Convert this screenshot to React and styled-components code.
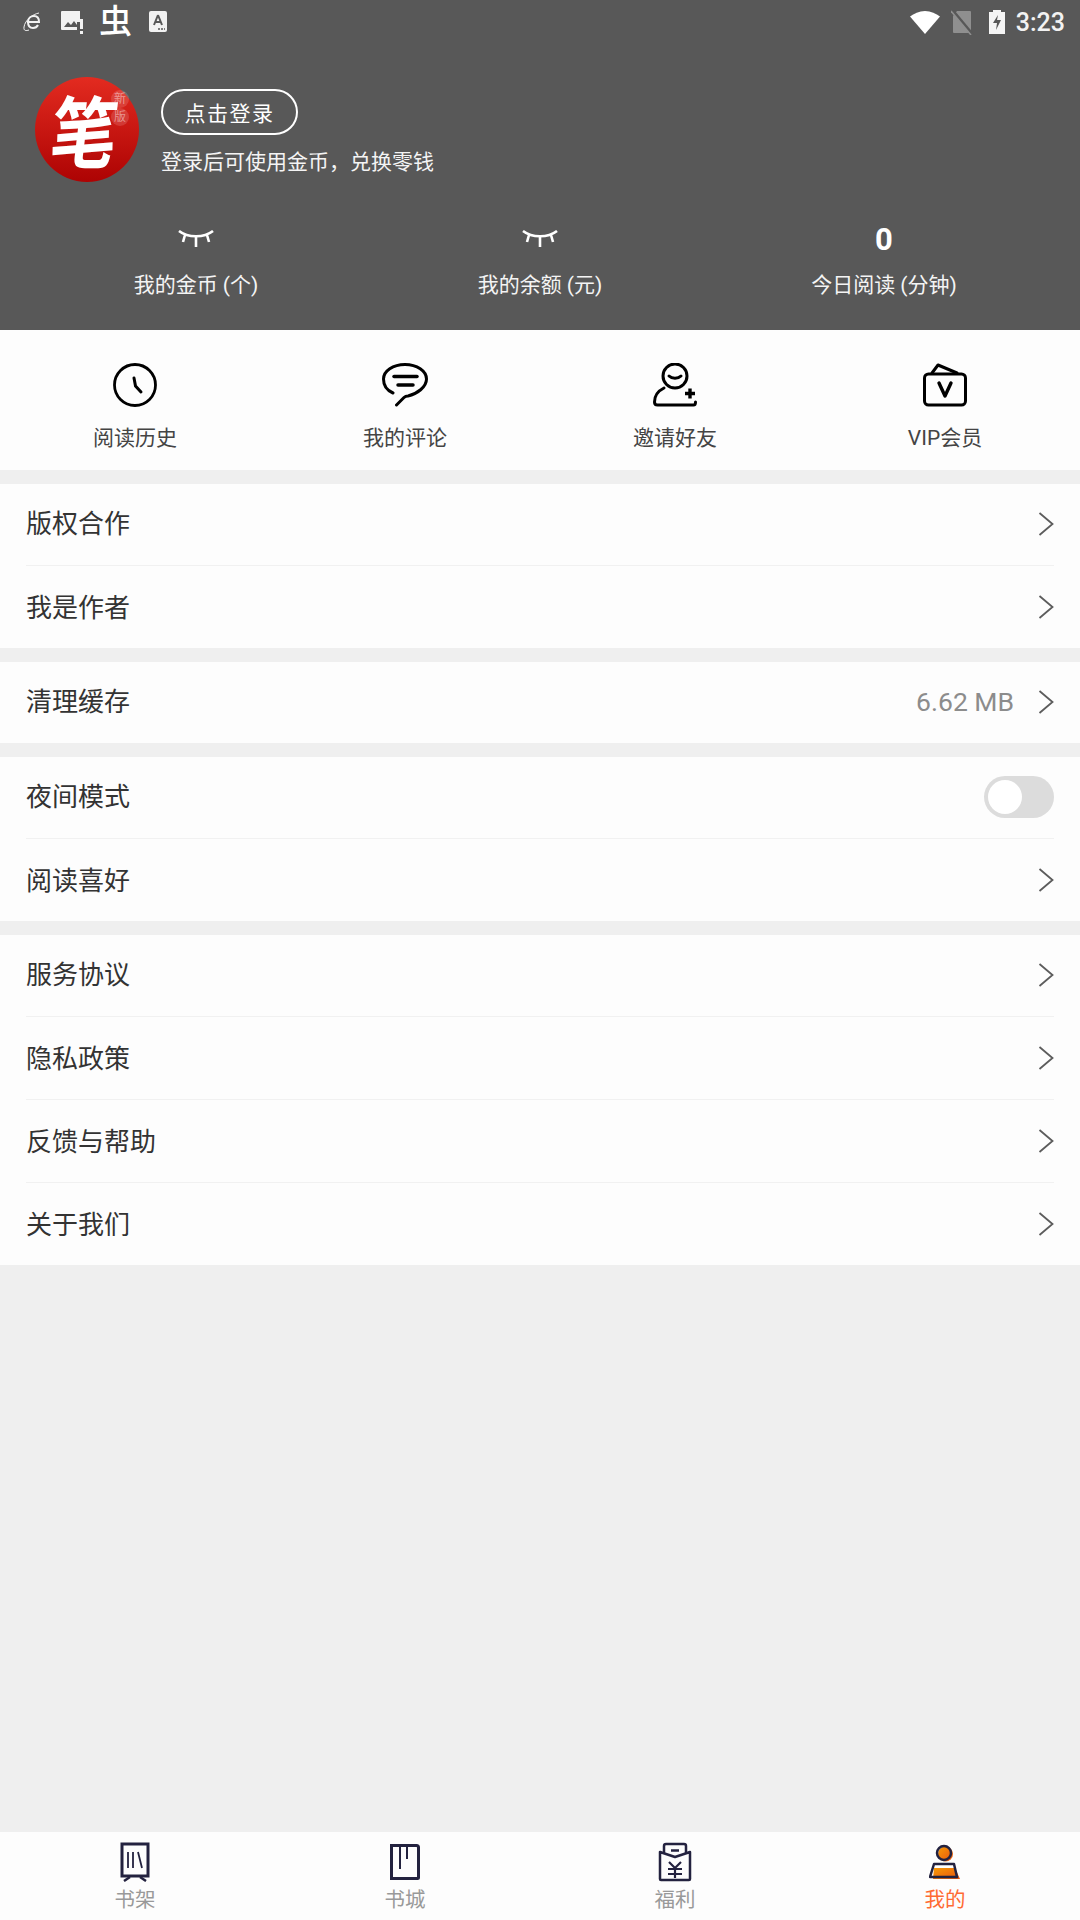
import React from "react";
import styled, { createGlobalStyle } from "styled-components";

const CJK = `"Roboto", "Noto Sans CJK SC", sans-serif`;

const Global = createGlobalStyle`
  html, body { margin: 0; padding: 0; background: #efefef; }
  * { box-sizing: border-box; }
  body { font-family: ${CJK}; }
`;

const Page = styled.div`
  width: 1080px;
  height: 1920px;
  display: flex;
  flex-direction: column;
  background: #efefef;
  overflow: hidden;
`;

const Header = styled.header`
  height: 330px;
  background: #585858;
  color: #fff;
  display: flex;
  flex-direction: column;
`;

const StatusBar = styled.div`
  height: 44px;
  display: flex;
  align-items: center;
  justify-content: space-between;
  padding: 0 15px 0 23px;
`;

const StatusGroup = styled.div`
  display: flex;
  align-items: center;
  gap: ${(p) => p.$gap}px;
`;

const BugGlyph = styled.span`
  font-size: 33px;
  line-height: 36px;
  font-weight: 500;
  width: 34px;
  text-align: left;
  color: #fff;
`;

const Clock = styled.span`
  font-family: "Roboto", sans-serif;
  font-size: 25px;
  font-weight: 500;
  color: #f2f2f2;
`;

const Profile = styled.div`
  display: flex;
  align-items: flex-start;
  gap: 22px;
  padding: 33px 0 0 35px;
`;

const Avatar = styled.div`
  position: relative;
  width: 104px;
  height: 105px;
  border-radius: 50%;
  background: linear-gradient(#e32b20, #ad0303);
  display: flex;
  align-items: center;
  justify-content: center;
`;

const AvatarMark = styled.span`
  font-family: "Noto Sans CJK SC", sans-serif;
  font-size: 78px;
  font-weight: 700;
  line-height: 1;
  color: #fff;
  transform: translate(-2px, -2px) scaleX(0.85) skewX(-8deg);
`;

const Stamp = styled.span`
  position: absolute;
  right: 10px;
  top: ${(p) => p.$top}px;
  width: 18px;
  height: 18px;
  border-radius: 50%;
  background: rgba(255, 255, 255, 0.14);
  color: rgba(255, 255, 255, 0.45);
  font-size: 12px;
  line-height: 18px;
  text-align: center;
`;

const ProfileText = styled.div`
  display: flex;
  flex-direction: column;
  align-items: flex-start;
  padding-top: 12px;
`;

const LoginButton = styled.button`
  width: 137px;
  height: 46px;
  border: 2px solid #fff;
  border-radius: 23px;
  background: transparent;
  color: #fff;
  font-family: ${CJK};
  font-size: 21px;
  letter-spacing: 1.5px;
  padding: 0;
`;

const Hint = styled.div`
  margin-top: 12px;
  font-size: 21px;
  line-height: 30px;
  color: #f4f4f4;
`;

const Stats = styled.div`
  display: grid;
  grid-template-columns: repeat(3, 344px);
  padding: 39px 24px 0;
`;

const Stat = styled.div`
  display: flex;
  flex-direction: column;
  align-items: center;
`;

const StatValue = styled.div`
  height: 36px;
  display: flex;
  align-items: center;
  justify-content: center;
  font-size: 31px;
  font-weight: 700;
`;

const StatLabel = styled.div`
  margin-top: 13px;
  font-size: 21px;
  line-height: 30px;
  color: #f4f4f4;
`;

const Shortcuts = styled.nav`
  height: 140px;
  background: #fdfdfd;
  display: grid;
  grid-template-columns: repeat(4, 270px);
`;

const Shortcut = styled.div`
  display: flex;
  flex-direction: column;
  align-items: center;
  padding-top: 33px;
`;

const ShortcutLabel = styled.div`
  margin-top: 16px;
  font-size: 21px;
  line-height: 30px;
  color: #444;
`;

const Group = styled.section`
  margin-top: 14px;
  background: #fdfdfd;
  padding: 0 26px;
`;

const Row = styled.div`
  height: ${(p) => (p.$first ? 81 : 83)}px;
  padding-bottom: ${(p) => (p.$first ? 2 : 0)}px;
  display: flex;
  align-items: center;
  border-top: ${(p) => (p.$first ? "none" : "1px solid #f1f1f1")};
`;

const RowTitle = styled.div`
  flex: 1;
  padding-bottom: 4px;
  font-size: 26px;
  color: #333;
`;

const RowValue = styled.div`
  font-size: 26.5px;
  color: #8c8c8c;
  margin-right: 24px;
`;

const Toggle = styled.div`
  width: 70px;
  height: 42px;
  border-radius: 21px;
  background: #dcdcdc;
  padding: 4px;
`;

const Knob = styled.div`
  width: 34px;
  height: 34px;
  border-radius: 50%;
  background: #fff;
`;

const Spacer = styled.div`
  flex: 1;
`;

const TabBar = styled.nav`
  height: 88px;
  background: #fdfdfd;
  display: grid;
  grid-template-columns: repeat(4, 270px);
`;

const Tab = styled.div`
  display: flex;
  flex-direction: column;
  align-items: center;
  padding-top: 10px;
`;

const TabLabel = styled.div`
  margin-top: 4px;
  font-size: 20.5px;
  line-height: 28px;
  color: ${(p) => (p.$active ? "#ff6a33" : "#999")};
`;

const Closed = () => (
  <svg width="36" height="18" viewBox="0 0 36 18" fill="none" stroke="#fff" strokeWidth="2.6">
    <path d="M1 1c9 7 25 7 34 0M18 6v11M7 5l-2 7M29 5l2 7" />
  </svg>
);

const Chevron = () => (
  <svg width="16" height="24" viewBox="0 0 16 24" fill="none" stroke="#5c5c5c" strokeWidth="1.8">
    <path d="M1.500 1l13 11-13 11" />
  </svg>
);

const History = () => (
  <svg width="44" height="44" viewBox="0 0 44 44" fill="none" stroke="#000" strokeWidth="2.800" strokeLinecap="round">
    <circle cx="22" cy="22" r="20.500" />
    <path d="M21 15l1.500 8 5.500 6" strokeWidth="3" />
  </svg>
);

const Comment = () => (
  <svg width="46" height="44" viewBox="0 0 46 44" fill="none" stroke="#000" strokeWidth="3" strokeLinecap="round">
    <path d="M11 30C4 27 1.500 22 1.500 16 1.500 8 11 1.500 23 1.500S44.500 8 44.500 16 35 31 26 33c-2 0-3 .5-4 1.500L14.500 42" />
    <path d="M12 13.500h23" strokeWidth="3.500" />
    <path d="M16 22h15" strokeWidth="3.500" />
  </svg>
);

const Invite = () => (
  <svg width="44" height="44" viewBox="0 0 44 44" fill="none" stroke="#000" strokeWidth="3" strokeLinecap="round">
    <circle cx="22" cy="13" r="12" />
    <path d="M16 13c3 3 9 3 12 0" />
    <path d="M11 25C5 28 1.500 33 1.500 39c0 2 1 3 3 3h36c1 0 2-1 2-3" />
    <path d="M32 30.500h10M37 25.500v10" strokeWidth="3.400" strokeLinecap="butt" />
  </svg>
);

const Vip = () => (
  <svg width="44" height="44" viewBox="0 0 44 44" fill="none" stroke="#000" strokeWidth="3" strokeLinecap="round" strokeLinejoin="round">
    <rect x="1.500" y="11" width="41" height="31" rx="4" />
    <path d="M9 10l6-8 19 8" />
    <path d="M16 20l6 13 6-13" strokeWidth="3.400" />
  </svg>
);

const Shelf = () => (
  <svg width="30" height="40" viewBox="0 0 30 40" fill="none" stroke="#23223f" strokeWidth="2.500">
    <rect x="2" y="2" width="26" height="32" strokeWidth="3" />
    <path d="M8 10v16M13 10v16M18 10l4 16" strokeWidth="1.800" />
    <path d="M10 35l-6 4M20 35l6 4" />
  </svg>
);

const Store = () => (
  <svg width="30" height="40" viewBox="0 0 30 40" fill="none" stroke="#23223f" strokeWidth="3">
    <path d="M1.500 3.500h25a2 2 0 0 1 2 2v30a1 1 0 0 1-1 1h-26z" />
    <path d="M10 5v22M17 5v12" strokeWidth="2" />
  </svg>
);

const Welfare = () => (
  <svg width="34" height="40" viewBox="0 0 34 40" fill="none" stroke="#23223f" strokeWidth="2.500" strokeLinejoin="round">
    <path d="M6 11V4a2 2 0 0 1 2-2h18a2 2 0 0 1 2 2v7" />
    <path d="M2 10v27a1 1 0 0 0 1 1h28a1 1 0 0 0 1-1V10l-15 5z" />
    <path d="M13 8.500h8" />
    <path d="M11 20l6 6 6-6M10 27h14M10 32h14M17 26v10" strokeWidth="2.200" />
  </svg>
);

const Mine = () => (
  <svg width="32" height="40" viewBox="0 0 32 40" fill="none">
    <defs>
      <linearGradient id="mineFill" x1="0" y1="0" x2="1" y2="1">
        <stop offset="0" stopColor="#f79a06" />
        <stop offset="1" stopColor="#e8530f" />
      </linearGradient>
    </defs>
    <circle cx="16.500" cy="12" r="7.500" fill="url(#mineFill)" />
    <path d="M6 22h19l3 14H3z" fill="#fff" />
    <path d="M5 26h21l5 11H4z" fill="url(#mineFill)" />
    <circle cx="15" cy="11" r="7" stroke="#23223f" strokeWidth="2.500" />
    <path d="M5 22h20l3 13H1z" stroke="#23223f" strokeWidth="2.500" strokeLinejoin="round" />
  </svg>
);

const IeIcon = () => (
  <svg width="22" height="20" viewBox="0 0 22 20" fill="none" stroke="#f2f2f2" strokeWidth="2">
    <path d="M4 10h12c0-4-2-6-5-6s-6 2-6 6 2 6 5 6c3 0 4-1 5-3" />
    <path d="M16 1C10 2 2 8 1 15c-.5 4 2 4 5 3" strokeWidth="1" />
  </svg>
);

const PictureAlert = () => (
  <svg width="22" height="23" viewBox="0 0 22 23">
    <path d="M1 0h18v11h-3v8H1a1 1 0 0 1-1-1V1a1 1 0 0 1 1-1z" fill="#f2f2f2" />
    <path d="M3 16l4-5 3 3 3-4 3 4v2z" fill="#585858" />
    <path d="M19 8h3v10h-3zM19 20h3v3h-3z" fill="#f2f2f2" />
  </svg>
);

const FontIcon = () => (
  <svg width="18" height="22" viewBox="0 0 18 22">
    <rect width="18" height="21" rx="2" fill="#f2f2f2" />
    <path d="M9 4l-4 10M9 4l4 10M6.500 11h5" stroke="#585858" strokeWidth="2" fill="none" />
    <path d="M9 18h2M12 18h2M15 18h1" stroke="#585858" strokeWidth="1.500" />
  </svg>
);

const Wifi = () => (
  <svg width="30" height="23" viewBox="0 0 30 23">
    <path d="M0 5.500C4 2.500 9 0 15 0s11 2.500 15 5.500L15 23z" fill="#fff" />
  </svg>
);

const NoSim = () => (
  <svg width="27" height="25" viewBox="0 0 27 25">
    <path d="M6 1h13a1 1 0 0 1 1 1v20a1 1 0 0 1-1 1H3a1 1 0 0 1-1-1V6z" fill="#8f8f8f" />
    <path d="M2 1l20 24" stroke="#585858" strokeWidth="3" />
    <path d="M0 1l20 24" stroke="#8f8f8f" strokeWidth="1.500" />
  </svg>
);

const Battery = () => (
  <svg width="16" height="24" viewBox="0 0 16 24">
    <path d="M4 0h8v2h4v22H0V2h4z" fill="#f5f5f5" />
    <path d="M9 5L4 13h4l-1 7 5-10H8z" fill="#585858" />
  </svg>
);

const shortcuts = [
  { label: "阅读历史", Icon: History },
  { label: "我的评论", Icon: Comment },
  { label: "邀请好友", Icon: Invite },
  { label: "VIP会员", Icon: Vip },
];

const groups = [
  [{ title: "版权合作" }, { title: "我是作者" }],
  [{ title: "清理缓存", value: "6.62 MB" }],
  [{ title: "夜间模式", toggle: true }, { title: "阅读喜好" }],
  [{ title: "服务协议" }, { title: "隐私政策" }, { title: "反馈与帮助" }, { title: "关于我们" }],
];

const tabs = [
  { label: "书架", Icon: Shelf },
  { label: "书城", Icon: Store },
  { label: "福利", Icon: Welfare },
  { label: "我的", Icon: Mine, active: true },
];

export default function App() {
  return (
    <Page>
      <Global />
      <Header>
        <StatusBar>
          <StatusGroup $gap={16}>
            <IeIcon />
            <PictureAlert />
            <BugGlyph>虫</BugGlyph>
            <FontIcon />
          </StatusGroup>
          <StatusGroup $gap={11}>
            <Wifi />
            <NoSim />
            <Battery />
            <Clock>3:23</Clock>
          </StatusGroup>
        </StatusBar>
        <Profile>
          <Avatar>
            <AvatarMark>笔</AvatarMark>
            <Stamp $top={13}>新</Stamp>
            <Stamp $top={31}>版</Stamp>
          </Avatar>
          <ProfileText>
            <LoginButton>点击登录</LoginButton>
            <Hint>登录后可使用金币，兑换零钱</Hint>
          </ProfileText>
        </Profile>
        <Stats>
          <Stat>
            <StatValue><Closed /></StatValue>
            <StatLabel>我的金币 (个)</StatLabel>
          </Stat>
          <Stat>
            <StatValue><Closed /></StatValue>
            <StatLabel>我的余额 (元)</StatLabel>
          </Stat>
          <Stat>
            <StatValue>0</StatValue>
            <StatLabel>今日阅读 (分钟)</StatLabel>
          </Stat>
        </Stats>
      </Header>

      <Shortcuts>
        {shortcuts.map(({ label, Icon }) => (
          <Shortcut key={label}>
            <Icon />
            <ShortcutLabel>{label}</ShortcutLabel>
          </Shortcut>
        ))}
      </Shortcuts>

      {groups.map((rows) => (
        <Group key={rows[0].title}>
          {rows.map((row, i) => (
            <Row key={row.title} $first={i === 0}>
              <RowTitle>{row.title}</RowTitle>
              {row.value && <RowValue>{row.value}</RowValue>}
              {row.toggle ? (
                <Toggle><Knob /></Toggle>
              ) : (
                <Chevron />
              )}
            </Row>
          ))}
        </Group>
      ))}

      <Spacer />

      <TabBar>
        {tabs.map(({ label, Icon, active }) => (
          <Tab key={label}>
            <Icon />
            <TabLabel $active={active}>{label}</TabLabel>
          </Tab>
        ))}
      </TabBar>
    </Page>
  );
}
